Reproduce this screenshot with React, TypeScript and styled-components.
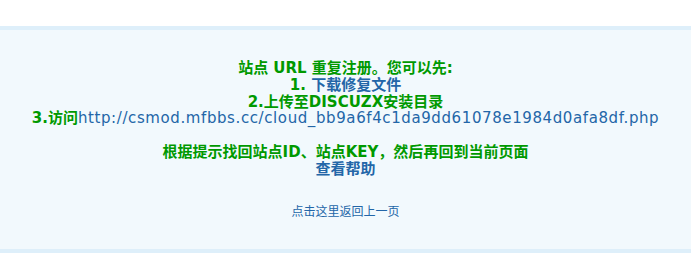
import * as React from "react";
import styled, { createGlobalStyle } from "styled-components";

const green = "#090";
const blue = "#2366A8";

const Global = createGlobalStyle`
  body {
    margin: 0;
    background: #fff;
    font: 12px Verdana, "DejaVu Sans", "Noto Sans CJK SC", sans-serif;
  }
  a {
    color: ${blue};
    text-decoration: none;
  }
`;

const Page = styled.div`
  padding-top: 26px;
`;

const InfoBox = styled.div`
  padding: 30px;
  text-align: center;
  border-top: 4px solid #deeffa;
  border-bottom: 4px solid #deeffa;
  background: #f2f9fd;
`;

const InfoTitle = styled.h4`
  margin: 0 0 27px;
  color: ${green};
  font-size: 15px;
  font-weight: 700;
  line-height: 16.8px;
`;

const UrlLink = styled.a`
  font-weight: 400;
  letter-spacing: 0.6px;
`;

const Back = styled.p`
  margin: 0;
  font-size: 12px;
  line-height: 14px;
`;

export default function App() {
  return (
    <Page>
      <Global />
      <InfoBox>
        <InfoTitle>
          站点 URL 重复注册。您可以先:
          <br />
          1. <a href="#">下载修复文件</a>
          <br />
          2.上传至DISCUZX安装目录
          <br />
          3.访问
          <UrlLink href="#">http://csmod.mfbbs.cc/cloud_bb9a6f4c1da9dd61078e1984d0afa8df.php</UrlLink>
          <br />
          <br />
          根据提示找回站点ID、站点KEY，然后再回到当前页面
          <br />
          <a href="#">查看帮助</a>
        </InfoTitle>
        <Back>
          <a href="#">点击这里返回上一页</a>
        </Back>
      </InfoBox>
    </Page>
  );
}
